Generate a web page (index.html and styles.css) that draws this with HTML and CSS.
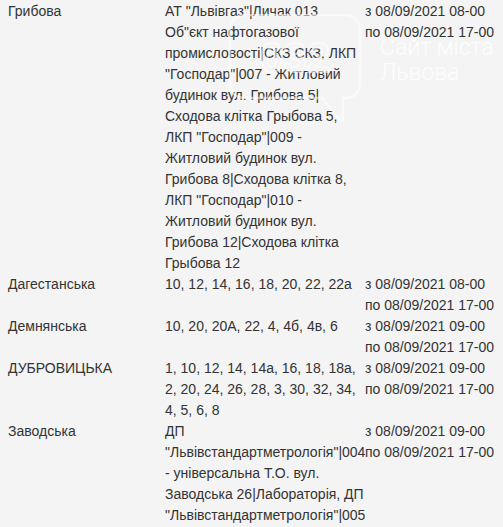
FILE: index.html
```html
<!DOCTYPE html>
<html lang="uk">
<head>
<meta charset="utf-8">
<link rel="stylesheet" href="styles.css">
</head>
<body>
<div class="table">
  <div class="row">
    <div class="street">Грибова</div>
    <div class="houses">АТ "Львівгаз"|Личак 013<br>Об"єкт нафтогазової промисловості|СКЗ СКЗ, ЛКП "Господар"|007 - Житловий будинок вул. Грибова 5|Сходова клітка Грыбова 5, ЛКП "Господар"|009 - Житловий будинок вул. Грибова 8|Сходова клітка 8, ЛКП "Господар"|010 - Житловий будинок вул. Грибова 12|Сходова клітка Грыбова 12</div>
    <div class="time">з 08/09/2021 08-00 по 08/09/2021 17-00</div>
  </div>
  <div class="row">
    <div class="street">Дагестанська</div>
    <div class="houses">10, 12, 14, 16, 18, 20, 22, 22а</div>
    <div class="time">з 08/09/2021 08-00 по 08/09/2021 17-00</div>
  </div>
  <div class="row">
    <div class="street">Демнянська</div>
    <div class="houses">10, 20, 20А, 22, 4, 4б, 4в, 6</div>
    <div class="time">з 08/09/2021 09-00 по 08/09/2021 17-00</div>
  </div>
  <div class="row">
    <div class="street">ДУБРОВИЦЬКА</div>
    <div class="houses">1, 10, 12, 14, 14а, 16, 18, 18а, 2, 20, 24, 26, 28, 3, 30, 32, 34, 4, 5, 6, 8</div>
    <div class="time">з 08/09/2021 09-00 по 08/09/2021 17-00</div>
  </div>
  <div class="row">
    <div class="street">Заводська</div>
    <div class="houses">ДП <span class="nw">"Львівстандартметрологія"|004</span> - універсальна Т.О. вул. Заводська 26|Лабораторія, ДП <span class="nw">"Львівстандартметрологія"|005</span></div>
    <div class="time">з 08/09/2021 09-00 по 08/09/2021 17-00</div>
  </div>
</div>
<div class="watermark" aria-hidden="true">
  <svg class="bubble" width="140" height="112" viewBox="0 0 140 112">
    <path d="M20 1 H118 Q134 1 134 17 V68 Q134 84 118 84 H117 V104 Q117 108 114 106 L96 84 H20 Q4 84 4 68 V17 Q4 1 20 1 Z" fill="none" stroke="#ffffff" stroke-width="2.5"/>
    <text x="69" y="58" text-anchor="middle" class="code">032</text>
  </svg>
  <div class="site">Сайт міста<br>Львова</div>
</div>
</body>
</html>
```
FILE: styles.css
```css
html, body {
  margin: 0;
  padding: 0;
  background: #f4f4f4;
  overflow: hidden;
}
body {
  font-family: "Liberation Sans", Arial, sans-serif;
  font-size: 14px;
  line-height: 21px;
  color: #333333;
  position: relative;
  width: 503px;
  height: 527px;
}
.table {
  padding: 1px 0 0 8px;
  display: flex;
  flex-direction: column;
}
.row {
  display: grid;
  grid-template-columns: 157px 200px 130px;
  column-gap: 0;
}
.nw {
  white-space: nowrap;
}
.watermark {
  position: absolute;
  left: 226px;
  top: 14px;
  display: flex;
  align-items: flex-start;
  pointer-events: none;
}
.bubble {
  flex: none;
  opacity: 0.55;
}
.code {
  font-family: "Liberation Sans", Arial, sans-serif;
  font-size: 42px;
  font-weight: 700;
  fill: none;
  stroke: #ffffff;
  stroke-width: 2;
}
.site {
  flex: none;
  white-space: nowrap;
  margin-left: 14px;
  margin-top: 21px;
  font-family: Roboto, "Liberation Sans", sans-serif;
  font-weight: 300;
  font-size: 23px;
  line-height: 25px;
  color: #ffffff;
  opacity: 0.9;
}
```
